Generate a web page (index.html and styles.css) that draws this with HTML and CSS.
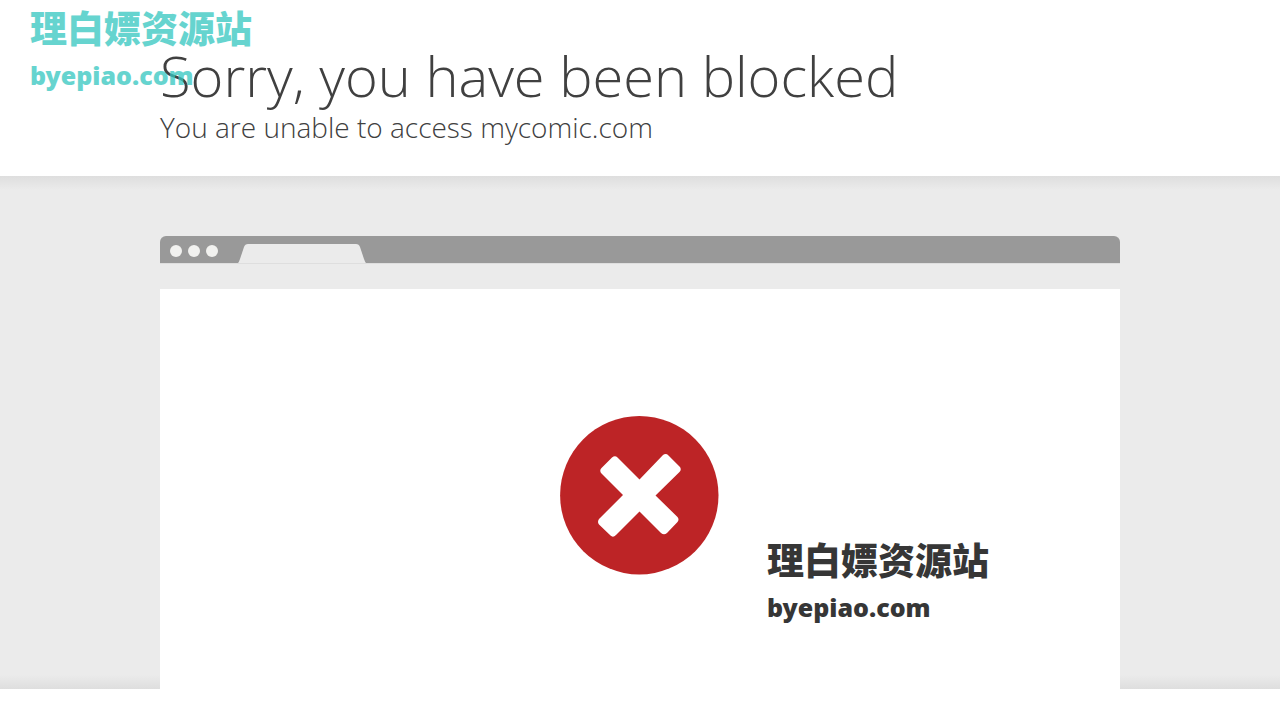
FILE: index.html
```
<!DOCTYPE html>
<html lang="en">
<head>
    <meta charset="UTF-8">
    <meta name="viewport" content="width=device-width, initial-scale=1.0">
    <title>Sorry, you have been blocked</title>
    <link rel="stylesheet" href="styles.css">
</head>
<body>
    <div class="watermark watermark-top" lang="zh-CN">
        <p class="mark-name">理白嫖资源站</p>
        <p class="mark-site">byepiao.com</p>
    </div>

    <header class="wrapper">
        <h1>Sorry, you have been blocked</h1>
        <h2>You are unable to access mycomic.com</h2>
    </header>

    <main class="captcha-section">
        <div class="browser">
            <div class="browser-bar">
                <span class="dot"></span>
                <span class="dot"></span>
                <span class="dot"></span>
                <svg class="tab" viewBox="0 0 128 19" aria-hidden="true">
                    <path d="M0 19 Q1 18 2 15 L6 3 Q7 0 10 0 H118 Q121 0 122 3 L126 15 Q127 18 128 19 Z"/>
                </svg>
            </div>
            <div class="browser-page">
                <svg class="error-icon" viewBox="0 0 160 160" role="img" aria-label="Blocked">
                    <circle cx="79.3" cy="79.2" r="79.2" fill="#bd2426"/>
                    <path d="M79.5 63.5 L103 39 Q106 37 108.500 39.500 L119.500 50.500 Q122 53 119.500 56 L95.500 79.500 L117.500 101 Q119.500 103.500 117.500 106 L107 117 Q104 119.500 101 117 L79.500 95.500 L56 119 Q53 122 50.500 119.500 L39 108.500 Q37 106 39 103 L63 79 L41.500 57.500 Q39 54.500 41.500 52 L52 41.500 Q55 39 57.500 41.500 Z" fill="#fff"/>
                </svg>
                <div class="watermark watermark-page" lang="zh-CN">
                    <p class="mark-name">理白嫖资源站</p>
                    <p class="mark-site">byepiao.com</p>
                </div>
            </div>
        </div>
    </main>
</body>
</html>
```
FILE: styles.css
```
body {
    margin: 0;
    background-color: #fff;
    color: #404040;
    font-family: "Open Sans", "Noto Sans", sans-serif;
}

h1,
h2,
p {
    margin: 0;
}

.wrapper,
.browser {
    width: 75%;
    margin: 0 auto;
}

.wrapper {
    padding: 40px 0 32px;
}

h1 {
    font-size: 56px;
    font-weight: 300;
    line-height: 70px;
}

h2 {
    font-size: 28px;
    font-weight: 300;
    line-height: 34px;
}

.captcha-section {
    padding-top: 60px;
    background-color: #ebebeb;
    background-image:
        linear-gradient(to bottom, #dedede, #ebebeb 14px, transparent 14px),
        linear-gradient(to top, #dedede, #ebebeb 14px, transparent 14px);
}

.browser-bar {
    display: flex;
    align-items: center;
    gap: 6px;
    height: 27px;
    padding-left: 10px;
    background-color: #999;
    border-bottom: 1px solid #dedede;
    border-radius: 6px 6px 0 0;
}

.dot {
    width: 12px;
    height: 12px;
    margin-top: 3px;
    border-radius: 50%;
    background-color: #f1f1ef;
}

.tab {
    align-self: flex-end;
    width: 128px;
    height: 19px;
    margin-left: 14px;
    fill: #ebebeb;
}

.browser-page {
    position: relative;
    display: flex;
    justify-content: center;
    align-items: flex-start;
    height: 273px;
    margin-top: 25px;
    padding-top: 127px;
    background-color: #fff;
}

.error-icon {
    width: 160px;
    height: 160px;
}

/* Site watermark */
.watermark {
    position: absolute;
    font-family: "Noto Sans", "Noto Sans CJK SC", sans-serif;
    font-weight: 900;
    white-space: nowrap;
}

.watermark-top {
    top: 5px;
    left: 30px;
    color: #34c6c0;
    opacity: 0.75;
}

.watermark-page {
    top: 248px;
    left: 607px;
    color: #363636;
}

.mark-name {
    font-size: 37px;
    line-height: 48px;
}

.mark-site {
    font-size: 25px;
    line-height: 44px;
}
```
